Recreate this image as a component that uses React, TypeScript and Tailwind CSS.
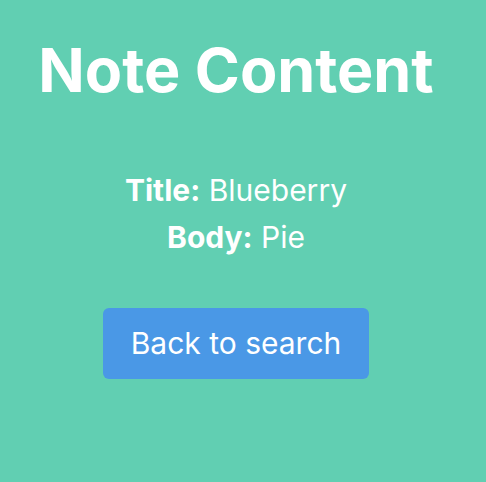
import React from 'react';

const App = () => {
  return (
    <div className="min-h-screen w-full bg-[#61cfb2] text-white" style={{ fontFamily: 'Inter, "Noto Sans", sans-serif' }}>
      <div className="w-[472px] flex flex-col items-center text-center">
        {/* heading */}
        <h1 className="mt-[40px] text-[61px] leading-[61px] font-bold">Note Content</h1>

        {/* note fields */}
        <div className="mt-[66px] text-[30px] leading-[47px]">
          <p><span className="font-bold">Title:</span> Blueberry</p>
          <p><span className="font-bold">Body:</span> Pie</p>
        </div>

        {/* back button */}
        <button className="mt-[47px] w-[266px] h-[71px] rounded-[6px] bg-[#4a98e6] text-[30px] text-white">
          Back to search
        </button>
      </div>
    </div>
  );
};

export default App;
